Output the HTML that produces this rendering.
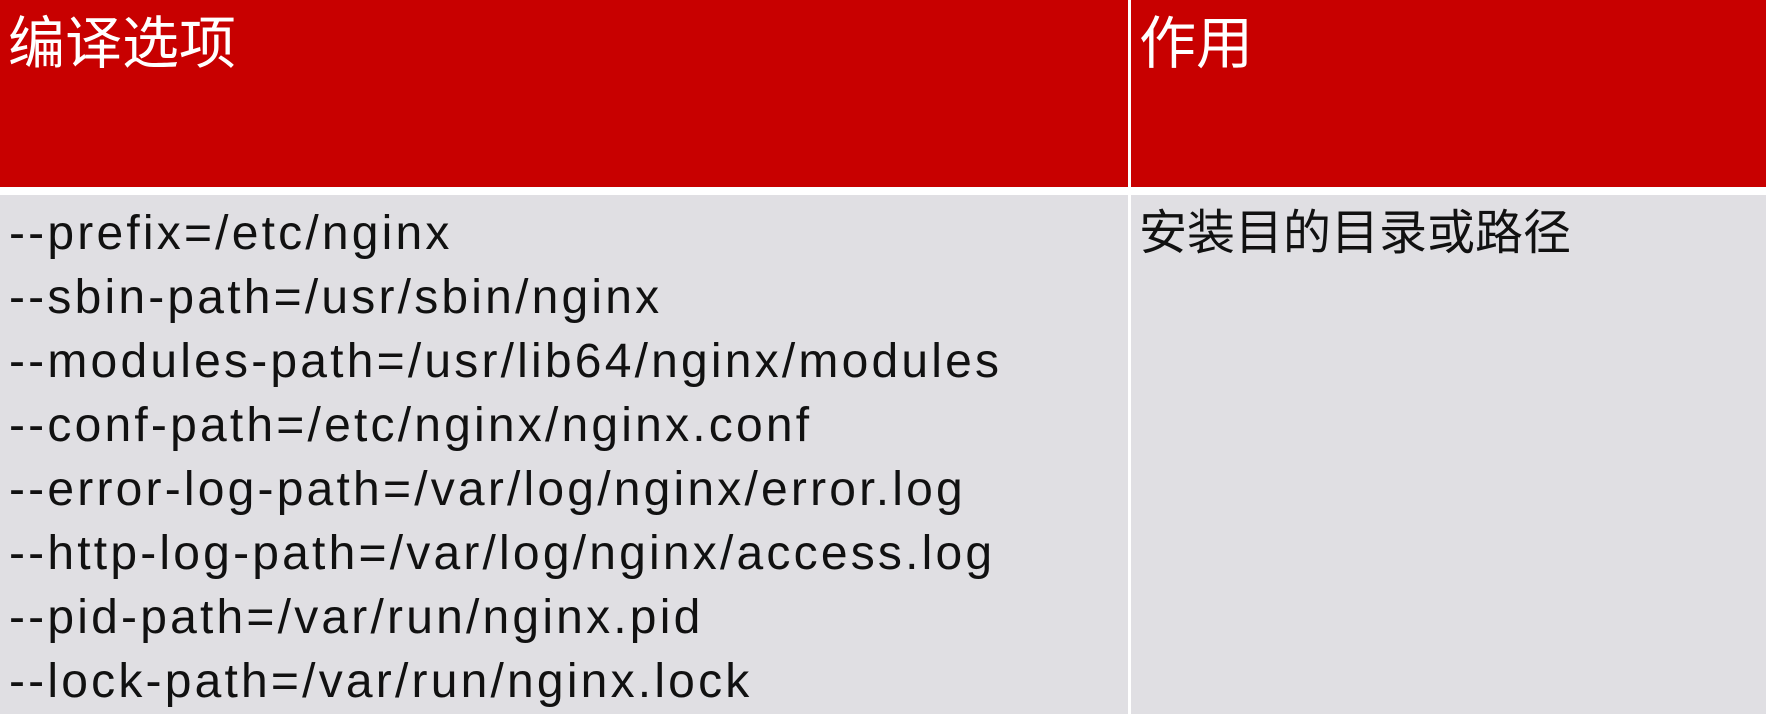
<!DOCTYPE html>
<html><head><meta charset="utf-8"><style>
body{margin:0;width:1770px;height:718px;background:#fff;position:relative;overflow:hidden;font-family:"Liberation Sans","Noto Sans CJK SC",sans-serif}
div{position:absolute}
.r{background:#c80000}
.g{background:#e0dfe3}
.h{color:#fff;font-size:57px;line-height:64px;top:12px}
.t{color:#111;font-size:48px;line-height:64px;left:9px;top:202px;white-space:pre;letter-spacing:3.2px}
</style></head><body>
<div class="r" style="left:0;top:0;width:1128px;height:187px"></div>
<div class="r" style="left:1131px;top:0;width:635px;height:187px"></div>
<div class="g" style="left:0;top:195px;width:1128px;height:519px"></div>
<div class="g" style="left:1131px;top:195px;width:635px;height:519px"></div>
<div class="h" style="left:8px">编译选项</div>
<div class="h" style="left:1139px">作用</div>
<div class="t">--prefix=/etc/nginx
--sbin-path=/usr/sbin/nginx
--modules-path=/usr/lib64/nginx/modules
--conf-path=/etc/nginx/nginx.conf
--error-log-path=/var/log/nginx/error.log
--http-log-path=/var/log/nginx/access.log
--pid-path=/var/run/nginx.pid
--lock-path=/var/run/nginx.lock</div>
<div style="left:1139px;top:204px;font-size:48px;line-height:60px;color:#111">安装目的目录或路径</div>
</body></html>
